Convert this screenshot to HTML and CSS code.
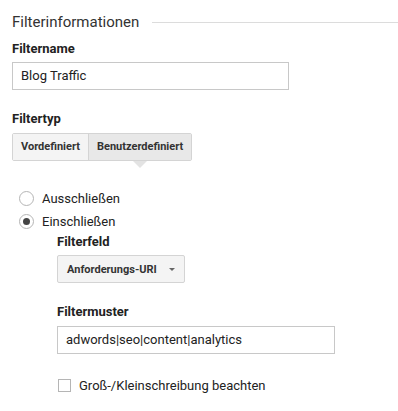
FILE: index.html
```html
<!DOCTYPE html>
<html lang="de">
<head>
    <meta charset="UTF-8">
    <title>Filter</title>
    <link rel="stylesheet" href="styles.css">
</head>
<body>
    <div class="page">
        <div class="section-head">
            <span class="section-title">Filterinformationen</span>
            <span class="section-line"></span>
        </div>

        <div class="label lbl-name">Filtername</div>
        <div class="textbox name-box">Blog Traffic</div>

        <div class="label lbl-type">Filtertyp</div>
        <div class="btn-group">
            <span class="seg">Vordefiniert</span>
            <span class="seg seg-on">Benutzerdefiniert</span>
        </div>

        <div class="radios">
            <div class="radio-row"><span class="radio"></span>Ausschließen</div>
            <div class="radio-row"><span class="radio radio-on"></span>Einschließen</div>
        </div>

        <div class="sub">
            <div class="label lbl-feld">Filterfeld</div>
            <div class="select">
                <span>Anforderungs-URI</span>
                <span class="caret"></span>
            </div>

            <div class="label lbl-muster">Filtermuster</div>
            <div class="textbox pattern-box">adwords|seo|content|analytics</div>

            <div class="check-row"><span class="check"></span>Groß-/Kleinschreibung beachten</div>
        </div>
    </div>
</body>
</html>
```

FILE: styles.css
```css
*{padding: 0;margin: 0;box-sizing: border-box;}
body{
    background: #fff;
    font-family: Roboto, "Liberation Sans", sans-serif;
    color: #222;
}
.page{
    padding: 12px 0 0 12px;
}
.section-head{
    display: flex;
    align-items: center;
    height: 20px;
}
.section-title{
    font-size: 15px;
    color: #333;
}
.section-line{
    flex: 1;
    height: 1px;
    background: #dcdcdc;
    margin-left: 13px;
}
.label{
    font-size: 13px;
    font-weight: bold;
    color: #222;
    line-height: 16px;
}
.lbl-name{margin-top: 9px;}
.textbox{
    height: 28px;
    border: 1px solid #c8c8c8;
    font-size: 13px;
    line-height: 26px;
    padding-left: 8px;
    color: #222;
}
.name-box{
    width: 277px;
    margin-top: 5px;
}
.lbl-type{margin-top: 21px;}
.btn-group{
    display: inline-flex;
    margin-top: 6px;
    border: 1px solid #d4d4d4;
    border-radius: 2px;
    position: relative;
}
.seg{
    font-size: 11px;
    font-weight: bold;
    color: #333;
    height: 26px;
    line-height: 26px;
    padding: 0 8px;
    background: #f4f4f4;
}
.seg + .seg{border-left: 1px solid #d4d4d4;}
.seg-on{
    background: #e8e8e8;
    position: relative;
}
.seg-on::after{
    content: "";
    position: absolute;
    left: 50%;
    bottom: -8px;
    margin-left: -7px;
    border-left: 7px solid transparent;
    border-right: 7px solid transparent;
    border-top: 7px solid #e3e3e3;
}
.radios{
    margin-top: 26px;
    padding-left: 7px;
}
.radio-row{
    display: flex;
    align-items: center;
    font-size: 13px;
    height: 23px;
    color: #222;
}
.radio{
    width: 15px;
    height: 15px;
    border: 1px solid #b5b5b5;
    border-radius: 50%;
    margin-right: 8px;
    position: relative;
}
.radio-on::after{
    content: "";
    position: absolute;
    left: 3px;
    top: 3px;
    width: 7px;
    height: 7px;
    border-radius: 50%;
    background: #444;
}
.sub{
    padding-left: 45px;
}
.lbl-feld{margin-top: 1px;}
.select{
    display: inline-flex;
    align-items: center;
    margin-top: 5px;
    height: 28px;
    width: 128px;
    border: 1px solid #d4d4d4;
    border-radius: 2px;
    background: #f4f4f4;
    font-size: 11px;
    font-weight: bold;
    color: #333;
    padding-left: 9px;
}
.caret{
    margin-left: auto;
    margin-right: 9px;
    border-left: 3px solid transparent;
    border-right: 3px solid transparent;
    border-top: 3px solid #666;
}
.lbl-muster{margin-top: 21px;}
.pattern-box{
    width: 278px;
    margin-top: 6px;
}
.check-row{
    display: flex;
    align-items: center;
    margin-top: 24px;
    font-size: 13px;
    color: #222;
}
.check{
    width: 13px;
    height: 13px;
    border: 1px solid #b5b5b5;
    margin: 0 8px 0 1px;
}
```
